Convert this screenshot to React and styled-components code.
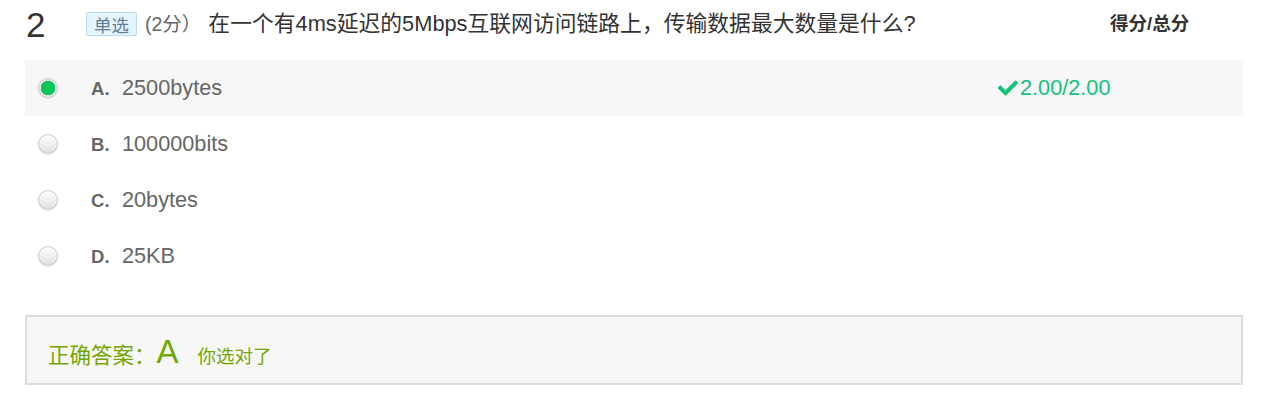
import styled, { createGlobalStyle } from "styled-components";
import { FaCheck } from "react-icons/fa";

const GlobalStyle = createGlobalStyle`
  body {
    margin: 0;
    background: #fff;
    font-family: "Liberation Sans", "Noto Sans CJK SC", sans-serif;
  }
`;

const Page = styled.div`
  width: 1218px;
  padding: 0 36px 0 25px;
`;

const QuestionHeader = styled.div`
  display: flex;
  align-items: center;
  height: 60px;
  padding-bottom: 12px;
  box-sizing: border-box;
`;

const QuestionNumber = styled.div`
  width: 61px;
  padding-left: 1px;
  box-sizing: border-box;
  font-size: 35px;
  color: #333;
  line-height: 1;
`;

const TypeTag = styled.span`
  display: inline-flex;
  align-items: center;
  height: 22px;
  padding: 0 7px;
  border: 1px solid #b5dcf6;
  border-radius: 2px;
  background: #e6f4fd;
  color: #5c7d99;
  font-size: 17.5px;
`;

const Points = styled.span`
  margin: 0 0 4px 8px;
  color: #666;
  font-size: 19.5px;
`;

const QuestionText = styled.div`
  flex: 1;
  margin: 0 0 6px 7px;
  color: #333;
  font-size: 21.8px;
`;

const ScoreHead = styled.div`
  width: 133px;
  margin-bottom: 4px;
  color: #333;
  font-size: 18.5px;
  font-weight: bold;
`;

const OptionList = styled.div`
  display: flex;
  flex-direction: column;
`;

const OptionRow = styled.div`
  display: flex;
  align-items: center;
  height: 56px;
  background: ${({ $active }) => ($active ? "#f7f7f7" : "transparent")};
`;

const Radio = styled.span`
  width: 20px;
  height: 20px;
  margin-left: 13px;
  border-radius: 50%;
  box-sizing: border-box;
  border: 1px solid #c8c8c8;
  background: ${({ $checked }) =>
    $checked
      ? "radial-gradient(circle, #06c65a 0 7px, #e8e8e8 7.5px)"
      : "linear-gradient(#fdfdfd, #e2e2e2)"};
  box-shadow: 0 1px 1px rgba(0, 0, 0, 0.08);
`;

const OptionBody = styled.div`
  flex: 1;
  display: flex;
  align-items: baseline;
  margin-left: 33px;
`;

const OptionLabel = styled.span`
  width: 31px;
  color: #666;
  font-size: 18.5px;
  font-weight: bold;
`;

const OptionText = styled.span`
  flex: 1;
  color: #666;
  font-size: 21.7px;
`;

const Score = styled.span`
  width: 245px;
  display: flex;
  align-items: center;
  gap: 2px;
  color: #13c27a;
  font-size: 21.7px;
`;

const AnswerBox = styled.div`
  display: flex;
  align-items: baseline;
  margin-top: 31px;
  height: 70px;
  box-sizing: border-box;
  padding: 16px 21px 0;
  border: 2px solid #dcdcdc;
  background: #f7f7f7;
  color: #74a600;
`;

const AnswerTitle = styled.span`
  font-size: 21.5px;
`;

const AnswerKey = styled.span`
  margin-left: 1px;
  font-size: 33px;
`;

const AnswerNote = styled.span`
  margin-left: 19px;
  font-size: 18.5px;
`;

const options = [
  { key: "A", text: "2500bytes", checked: true },
  { key: "B", text: "100000bits" },
  { key: "C", text: "20bytes" },
  { key: "D", text: "25KB" },
];

export default function App() {
  return (
    <Page>
      <GlobalStyle />
      <QuestionHeader>
        <QuestionNumber>2</QuestionNumber>
        <TypeTag>单选</TypeTag>
        <Points>(2分）</Points>
        <QuestionText>
          在一个有4ms延迟的5Mbps互联网访问链路上，传输数据最大数量是什么?
        </QuestionText>
        <ScoreHead>得分/总分</ScoreHead>
      </QuestionHeader>
      <OptionList>
        {options.map((opt) => (
          <OptionRow key={opt.key} $active={opt.checked}>
            <Radio $checked={opt.checked} />
            <OptionBody>
              <OptionLabel>{opt.key}.</OptionLabel>
              <OptionText>{opt.text}</OptionText>
            </OptionBody>
            {opt.checked && (
              <Score>
                <FaCheck size={20} />
                2.00/2.00
              </Score>
            )}
          </OptionRow>
        ))}
      </OptionList>
      <AnswerBox>
        <AnswerTitle>正确答案：</AnswerTitle>
        <AnswerKey>A</AnswerKey>
        <AnswerNote>你选对了</AnswerNote>
      </AnswerBox>
    </Page>
  );
}
